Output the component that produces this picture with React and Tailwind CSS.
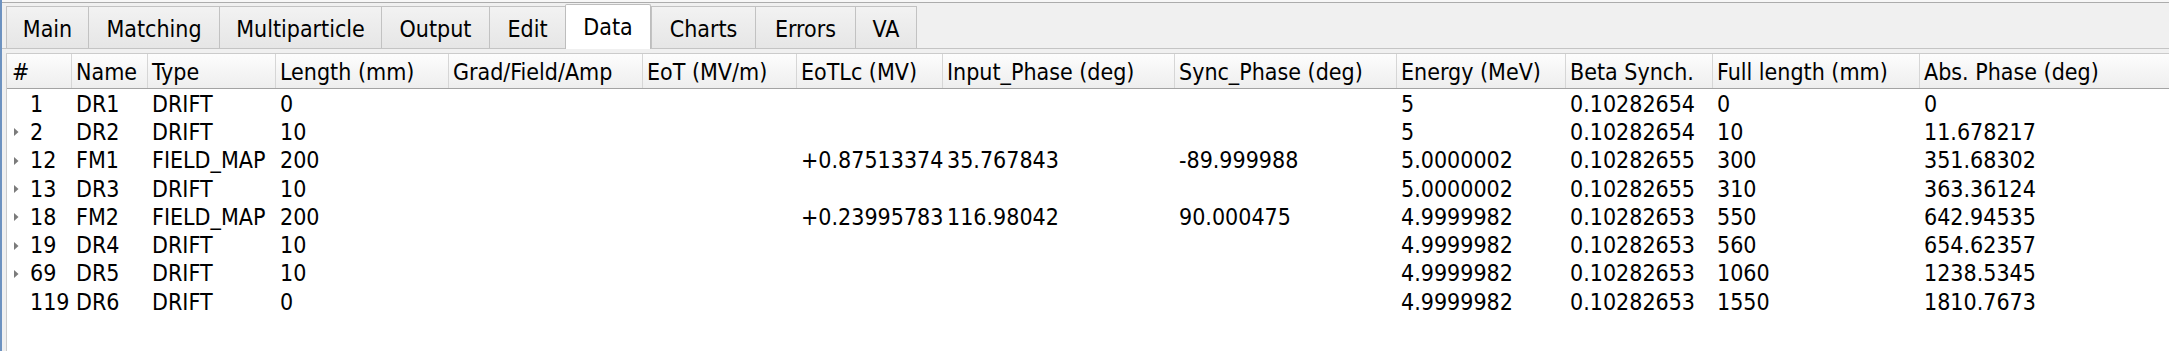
const tabs = [
  { label: "Main", w: "w-[82px]" },
  { label: "Matching", w: "w-[131px]" },
  { label: "Multiparticle", w: "w-[162px]" },
  { label: "Output", w: "w-[108px]" },
  { label: "Edit", w: "w-[76px]" },
  { label: "Data", w: "w-[86px]", active: true },
  { label: "Charts", w: "w-[104px]" },
  { label: "Errors", w: "w-[100px]" },
  { label: "VA", w: "w-[62px]", last: true },
];

const columns = [
  { label: "#", w: "w-[65px]" },
  { label: "Name", w: "w-[76px]" },
  { label: "Type", w: "w-[128px]" },
  { label: "Length (mm)", w: "w-[173px]" },
  { label: "Grad/Field/Amp", w: "w-[194px]" },
  { label: "EoT (MV/m)", w: "w-[154px]" },
  { label: "EoTLc (MV)", w: "w-[146px]" },
  { label: "Input_Phase (deg)", w: "w-[232px]" },
  { label: "Sync_Phase (deg)", w: "w-[222px]" },
  { label: "Energy (MeV)", w: "w-[169px]" },
  { label: "Beta Synch.", w: "w-[147px]" },
  { label: "Full length (mm)", w: "w-[207px]" },
  { label: "Abs. Phase (deg)", w: "flex-1" },
];

const rows = [
  { kids: false, cells: ["1", "DR1", "DRIFT", "0", "", "", "", "", "", "5", "0.10282654", "0", "0"] },
  { kids: true, cells: ["2", "DR2", "DRIFT", "10", "", "", "", "", "", "5", "0.10282654", "10", "11.678217"] },
  { kids: true, cells: ["12", "FM1", "FIELD_MAP", "200", "", "", "+0.87513374", "35.767843", "-89.999988", "5.0000002", "0.10282655", "300", "351.68302"] },
  { kids: true, cells: ["13", "DR3", "DRIFT", "10", "", "", "", "", "", "5.0000002", "0.10282655", "310", "363.36124"] },
  { kids: true, cells: ["18", "FM2", "FIELD_MAP", "200", "", "", "+0.23995783", "116.98042", "90.000475", "4.9999982", "0.10282653", "550", "642.94535"] },
  { kids: true, cells: ["19", "DR4", "DRIFT", "10", "", "", "", "", "", "4.9999982", "0.10282653", "560", "654.62357"] },
  { kids: true, cells: ["69", "DR5", "DRIFT", "10", "", "", "", "", "", "4.9999982", "0.10282653", "1060", "1238.5345"] },
  { kids: false, cells: ["119", "DR6", "DRIFT", "0", "", "", "", "", "", "4.9999982", "0.10282653", "1550", "1810.7673"] },
];

const Arrow = () => (
  <svg width="5" height="8" viewBox="0 0 5 8" className="block">
    <path d="M0 0 L4.5 4 L0 8 Z" fill="#7b7b7b" />
  </svg>
);

export default function App() {
  return (
    <div className="w-[2169px] h-[351px] overflow-hidden bg-[#f0f0f0] border-l-2 border-[#6d92c0] flex flex-col text-black text-[23px] leading-none font-['DejaVu_Sans_Condensed','Liberation_Sans',sans-serif] font-stretch-condensed">
      <div className="h-[2px] shrink-0 bg-[#f7f7f7]" />

      {/* tab bar */}
      <div className="flex items-end h-[46px] shrink-0 border-t border-[#acacac] pl-[4px]">
        {tabs.map((t) =>
          t.active ? (
            <div
              key={t.label}
              className={`${t.w} h-[45px] -mb-px relative z-10 flex items-center justify-center pt-[1px] bg-white border-l border-t border-r border-[#bdbdbd] rounded-t-[2px]`}
            >
              {t.label}
            </div>
          ) : (
            <div
              key={t.label}
              className={`${t.w} h-[42px] flex items-center justify-center pt-[3px] bg-linear-to-b from-[#f2f2f2] to-[#e6e6e6] border-l border-t border-[#c2c2c2] ${t.last ? "border-r" : ""}`}
            >
              {t.label}
            </div>
          )
        )}
      </div>

      {/* pane */}
      <div className="flex-1 border-t border-[#c4c4c4] pl-[4px] pt-[4px] min-h-0">
        <div className="h-full bg-white border-l border-t border-[#cbcbcb] flex flex-col">
          <div className="flex h-[35px] shrink-0 border-b border-[#a3a3a3] bg-linear-to-b from-[#fdfdfd] to-[#eeeeee]">
            {columns.map((c, i) => (
              <div
                key={c.label}
                className={`${c.w} shrink-0 flex items-center whitespace-nowrap overflow-hidden pt-[2px] ${i === 0 ? "pl-[5px]" : "pl-[4px]"} ${c.w === "flex-1" ? "" : "border-r border-[#d6d6d6]"}`}
              >
                {c.label}
              </div>
            ))}
          </div>

          <div className="flex flex-col">
            {rows.map((r) => (
              <div key={r.cells[0]} className="flex h-[28.3px]">
                {r.cells.map((v, i) =>
                  i === 0 ? (
                    <div key={i} className={`${columns[i].w} shrink-0 flex items-center pl-[7px] pt-[2px]`}>
                      <span className="w-[16px] flex items-center">{r.kids && <Arrow />}</span>
                      <span>{v}</span>
                    </div>
                  ) : (
                    <div
                      key={i}
                      className={`${columns[i].w} shrink-0 flex items-center pl-[4px] pt-[2px] whitespace-nowrap`}
                    >
                      {v}
                    </div>
                  )
                )}
              </div>
            ))}
          </div>
        </div>
      </div>
    </div>
  );
}
